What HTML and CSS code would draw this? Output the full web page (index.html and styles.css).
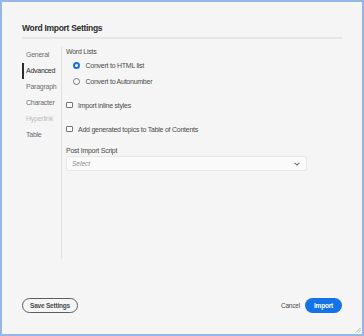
FILE: index.html
```html
<!DOCTYPE html>
<html lang="en">
<head>
    <meta charset="UTF-8">
    <meta name="viewport" content="width=device-width, initial-scale=1.0">
    <title>Word Import Settings</title>
    <link rel="stylesheet" href="styles.css">
</head>
<body>
    <div class="dialog">
        <div class="dialog-header">
            <h1>Word Import Settings</h1>
        </div>
        <div class="dialog-main">
            <nav class="side-nav">
                <a href="#">General</a>
                <a href="#" class="active">Advanced</a>
                <a href="#">Paragraph</a>
                <a href="#">Character</a>
                <a href="#" class="disabled">Hyperlink</a>
                <a href="#">Table</a>
            </nav>
            <div class="content">
                <div class="field-label">Word Lists</div>
                <div class="radio-group">
                    <label class="option">
                        <input type="radio" name="lists" checked>
                        <span>Convert to HTML list</span>
                    </label>
                    <label class="option">
                        <input type="radio" name="lists">
                        <span>Convert to Autonumber</span>
                    </label>
                </div>
                <label class="option check">
                    <input type="checkbox">
                    <span>Import inline styles</span>
                </label>
                <label class="option check">
                    <input type="checkbox">
                    <span>Add generated topics to Table of Contents</span>
                </label>
                <div class="field-label script-label">Post Import Script</div>
                <div class="select">
                    <span class="placeholder">Select</span>
                    <svg width="6" height="4" viewBox="0 0 6 4">
                        <path d="M0.6 0.8 L3 3.1 L5.4 0.8" fill="none" stroke="#6e6e6e" stroke-width="1.1"/>
                    </svg>
                </div>
            </div>
        </div>
        <div class="dialog-footer">
            <button class="btn-outline">Save Settings</button>
            <div class="footer-right">
                <button class="btn-quiet">Cancel</button>
                <button class="btn-primary">Import</button>
            </div>
        </div>
        <svg class="grip" width="6" height="6" viewBox="0 0 6 6">
            <path d="M5.5 1 L1 5.5 M5.5 3.5 L3.5 5.5" stroke="#a0a0a0" stroke-width="0.8"/>
        </svg>
    </div>
</body>
</html>
```

FILE: styles.css
```css
* {
    margin: 0;
    padding: 0;
    box-sizing: border-box;
    font-family: "Liberation Sans", Arial, sans-serif;
}

body {
    background-color: #f5f5f5;
}

.dialog {
    position: relative;
    height: 100vh;
    display: flex;
    flex-direction: column;
    background-color: #f5f5f5;
    border: 2px solid #94b7e4;
    padding: 0 20px 21px 20px;
}

.dialog-header {
    padding-top: 20px;
    padding-bottom: 3px;
    border-bottom: 2px solid #e6e6e6;
}

.dialog-header h1 {
    font-size: 8.5px;
    line-height: 12px;
    font-weight: bold;
    letter-spacing: -0.3px;
    color: #2c2c2c;
}

.dialog-main {
    display: flex;
    margin-top: 8px;
    height: 212px;
}

.side-nav {
    width: 39px;
    display: flex;
    flex-direction: column;
}

.side-nav a {
    display: block;
    height: 16px;
    line-height: 16px;
    padding-left: 2px;
    border-left: 2px solid transparent;
    font-size: 7px;
    letter-spacing: -0.25px;
    color: #6e6e6e;
    text-decoration: none;
}

.side-nav a.active {
    border-left-color: #2c2c2c;
    color: #2c2c2c;
}

.side-nav a.disabled {
    color: #bcbcbc;
}

.content {
    flex-grow: 1;
    border-left: 1px solid #e1e1e1;
    padding-left: 4px;
}

.field-label {
    font-size: 7px;
    line-height: 10px;
    letter-spacing: -0.25px;
    color: #4b4b4b;
}

.radio-group {
    padding-left: 7px;
}

.option {
    display: flex;
    align-items: center;
    height: 16px;
    font-size: 7px;
    letter-spacing: -0.25px;
    color: #4b4b4b;
}

.option input {
    appearance: none;
    -webkit-appearance: none;
    width: 7px;
    height: 7px;
    margin-right: 5.5px;
    background-color: #fff;
    border: 1px solid #747474;
    flex-shrink: 0;
}

.option input[type="radio"] {
    border-radius: 50%;
}

.option input[type="radio"]:checked {
    border: 2px solid #1473e6;
}

.option.check {
    margin-top: 8px;
}

.option.check input {
    width: 6.5px;
    height: 6.5px;
    border-radius: 1px;
}

.script-label {
    margin-top: 9px;
}

.select {
    width: 241px;
    height: 15px;
    display: flex;
    align-items: center;
    justify-content: space-between;
    padding: 0 6px 0 5px;
    background-color: #fafafa;
    border: 1px solid #e8e8e8;
    border-radius: 2px;
}

.select .placeholder {
    font-size: 6.5px;
    font-style: italic;
    color: #8e8e8e;
}

.dialog-footer {
    margin-top: auto;
    display: flex;
    justify-content: space-between;
    align-items: center;
}

.footer-right {
    display: flex;
    align-items: center;
}

button {
    height: 15px;
    border: none;
    background: none;
    font-size: 6.5px;
    letter-spacing: -0.2px;
    cursor: pointer;
}

.btn-outline {
    padding: 0 7px;
    border: 1px solid #5c5c5c;
    border-radius: 8px;
    font-weight: bold;
    color: #4b4b4b;
}

.btn-quiet {
    padding: 0 5px;
    color: #4b4b4b;
}

.btn-primary {
    width: 37px;
    border-radius: 8px;
    background-color: #1473e6;
    color: white;
    font-weight: bold;
}

.grip {
    position: absolute;
    right: 1px;
    bottom: 1px;
}
```
